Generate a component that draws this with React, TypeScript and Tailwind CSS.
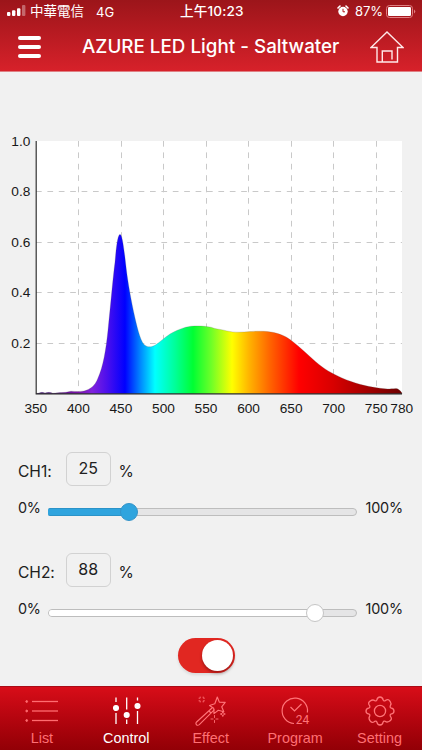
import React from 'react';

const X_TICKS = [350, 400, 450, 500, 550, 600, 650, 700, 750, 780];
const Y_TICKS = [1.0, 0.8, 0.6, 0.4, 0.2];
const px = (nm: number) => 36 + (nm - 350) * 0.851;
const py = (v: number) => 322 - v * 252.6;

const CURVE =
  'M36 321.6 L39 321 Q42 319.6 45 321 Q49 319.6 53 321.2 L60 320.6 Q65 320.8 71 319.2 Q78 320 84 319 C90 317.5 95 314 98 306 C103 295 106 278 108 258 C111 229 113 205 115 190 C116.5 172 118 162.4 120 162.4 C122 162.4 123.5 172 126.3 197 C128 211 131 228 135 246 C138 259 141 270 144.5 273 C148 275.7 152 275 155 273.3 C160 270 164 266 170 262 C176 258.5 184 255 191 254.2 C198 253.6 205 254 211 255.2 C216 257.5 221 257 227 259 C235 261 243 260 250 259.6 C260 258.8 268 259.2 274 260.6 C282 262.5 287 265 292 269 C301 276 308 283 316 290 C324 297 332 301.5 342 306 C355 311.5 365 314 377 315.8 C385 317.3 389 317 396 316.4 Q399 316.4 402 321 L402 322 L36 322 Z';

const STOPS: [number, string][] = [
  [36, '#3b0a78'], [78, '#7a12a8'], [92, '#8022dc'], [106, '#5010ec'], [125, '#0000ff'],
  [140, '#0084ff'], [155, '#00ffff'], [175, '#00ff99'], [193, '#00ff33'], [211, '#6cff28'],
  [232, '#ffff00'], [249, '#ffb400'], [270, '#ff6400'], [299, '#ff0000'], [333, '#d80000'],
  [376, '#960000'], [402, '#6c0000'],
];

function StatusBar() {
  return (
    <div className="relative flex h-[22px] items-center pl-[7px] pr-[6px] font-['Inter','Noto_Sans_CJK_TC',sans-serif] text-[13px] leading-[22px]">
      <svg width="19" height="12" viewBox="0 0 19 12" fill="white">
        <rect x="0" y="7" width="3.4" height="4" rx="1" />
        <rect x="5" y="5.2" width="3.4" height="5.8" rx="1" />
        <rect x="10" y="3.2" width="3.4" height="7.8" rx="1" />
        <rect x="15" y="0" width="3.4" height="11" rx="1" opacity=".35" />
      </svg>
      <span className="ml-[4px] w-[66px] text-[13.5px]">中華電信</span>
      <span className="pt-[2px] text-[13px]">4G</span>
      <span className="absolute left-[180px] text-[13.6px] font-medium tracking-[0.15px]">上午10:23</span>
      <svg className="ml-auto" width="12" height="12" viewBox="0 0 12 12" fill="white">
        <circle cx="6" cy="6.5" r="4.7" />
        <path d="M1 3 3 1M11 3 9 1" stroke="white" strokeWidth="1.6" strokeLinecap="round" />
        <path d="M6 3.8V6.8H8" stroke="#b1161b" strokeWidth="1" fill="none" />
      </svg>
      <span className="ml-[6px] w-[31px] text-[13px] tracking-[-0.1px]">87%</span>
      <svg width="30" height="13" viewBox="0 0 30 13">
        <rect x=".5" y=".5" width="26" height="12" rx="3" fill="none" stroke="#e07f82" />
        <rect x="2" y="2" width="23" height="9" rx="1.3" fill="white" />
        <path d="M28 4.5Q30.5 6.5 28 8.5Z" fill="#e07f82" />
      </svg>
    </div>
  );
}

function Header() {
  return (
    <header className="h-[72px] border-b border-[#df8084] bg-gradient-to-b from-[#9c151a] to-[#d7212a] text-white">
      <StatusBar />
      <div className="flex h-[49px] items-center pl-[18px] pr-[18px]">
        <div className="flex w-[23px] flex-col gap-[5px]">
          <i className="h-[4px] rounded-full bg-white" />
          <i className="h-[4px] rounded-full bg-white" />
          <i className="h-[4px] rounded-full bg-white" />
        </div>
        <h1 className="ml-[41px] whitespace-nowrap font-['Inter',sans-serif] text-[18.8px] font-medium leading-[24px] tracking-[0.02px]">
          AZURE LED Light - Saltwater
        </h1>
        <svg className="ml-auto" width="34" height="32" viewBox="0 0 34 32" fill="none" stroke="#ffe9e9" strokeWidth="1.4">
          <path d="M7 16.5H1L17 1 33 16.5H27.5V31H7Z M12.3 31V20H22V28.5" />
        </svg>
      </div>
    </header>
  );
}

function Spectrum() {
  return (
    <svg className="block" width="422" height="356" viewBox="0 0 422 356">
      <defs>
        <linearGradient id="spectrum" gradientUnits="userSpaceOnUse" x1="36" y1="0" x2="402" y2="0">
          {STOPS.map(([x, c]) => (
            <stop key={x} offset={(x - 36) / 366} stopColor={c} />
          ))}
        </linearGradient>
      </defs>
      <rect x="36" y="69" width="366" height="253" fill="white" />
      <g stroke="#c9c9c9" strokeWidth="1" strokeDasharray="5.7 5.7">
        {X_TICKS.slice(1, 9).map((t) => (
          <line key={t} x1={Math.floor(px(t)) + 0.5} x2={Math.floor(px(t)) + 0.5} y1="69" y2="322" />
        ))}
        {Y_TICKS.slice(1).map((t) => (
          <line key={t} x1="36" x2="402" y1={Math.floor(py(t)) + 0.5} y2={Math.floor(py(t)) + 0.5} />
        ))}
      </g>
      <path d={CURVE} fill="url(#spectrum)" stroke="#555" strokeOpacity=".35" strokeWidth=".6" />
      <path d="M36.2 69V321.8H402" fill="none" stroke="#333" strokeWidth="1.2" />
      <g fontFamily="Liberation Sans, sans-serif" fontSize="13.7" fill="#181818">
        {Y_TICKS.map((t) => (
          <text key={t} x="30.4" y={py(t) + 4.3} textAnchor="end">{t.toFixed(1)}</text>
        ))}
        {X_TICKS.map((t) => (
          <text key={t} x={px(t) - 0.2} y="340.5" textAnchor="middle">{t}</text>
        ))}
      </g>
    </svg>
  );
}

function Channel({ name, value, blue }: { name: string; value: number; blue?: boolean }) {
  return (
    <section className="h-[101px] pl-[18px] font-['Inter',sans-serif] text-[#202020]">
      <div className="flex h-[35px] text-[15.6px]">
        <span className="w-[48px] pt-[10px] leading-[20px] tracking-[-0.05px]">{name}</span>
        <span className="h-[34px] w-[44.5px] rounded-[6px] border border-[#d2d2d2] text-center text-[16px] leading-[31px]">{value}</span>
        <span className="pl-[8px] pt-[10px] leading-[20px]">%</span>
      </div>
      <div className="mt-[12px] flex h-[26px] items-center text-[14.4px]">
        <span className="w-[30px] pb-[8px] tracking-[-0.4px]">0%</span>
        <div className="relative h-[8px] w-[309px] rounded-full border border-[#bdbdbd] bg-[#e5e5e6]">
          <div className={blue ? '-ml-px -mt-px h-[8px] w-[81px] rounded-l-[2px] border-y border-[#2b93c8] bg-[#2fa4de]' : 'h-[6px] w-[266px] rounded-l-full bg-white'} />
          <div className={blue ? 'absolute left-[71px] top-[-6px] size-[18px] rounded-full border border-[#3494c9] bg-[#2fa4de]' : 'absolute left-[257px] top-[-6px] size-[18px] rounded-full border border-[#c5c5c5] bg-white'} />
        </div>
        <span className="ml-[8.5px] pb-[8px] tracking-[-0.2px]">100%</span>
      </div>
    </section>
  );
}

function ListIcon() {
  return (
    <svg width="36" height="30" viewBox="0 0 36 30" fill="#ff6c70" stroke="#ff6c70">
      {[5.5, 15, 24.5].map((y) => (
        <g key={y}>
          <circle cx="2.7" cy={y} r=".9" />
          <path d={`M8 ${y}H34`} strokeWidth="1.3" />
        </g>
      ))}
    </svg>
  );
}

function ControlIcon() {
  return (
    <svg width="30" height="30" viewBox="0 0 30 30" fill="white" stroke="white" strokeWidth="1.3">
      <path d="M4 1.5V6M4 17V28M14.7 1.5V13.5M14.7 23.5V28M25.5 1.5V4.5M25.5 15V28" />
      <circle cx="4" cy="12" r="2.4" />
      <circle cx="14.7" cy="19" r="2.4" />
      <circle cx="25.5" cy="10" r="2.4" />
    </svg>
  );
}

function EffectIcon() {
  return (
    <svg width="32" height="30" viewBox="0 0 32 30" fill="none" stroke="#ff7478" strokeWidth="1.15" strokeLinejoin="round" strokeLinecap="round">
      <path d="M22.3 1 24.3 6.1 30.2 6.4 26.7 10.8 28.8 15.8 23.3 14.3 19 17.6 18.7 12.3 14.5 9.5 19.8 7.7Z" />
      <path d="M17.3 11.8 1.3 26.3Q.4 28 1.7 29Q3 29.7 4.3 28.6L19.2 13.8M14 15 16 17" />
      <path d="M5.2 1V2.2H4M8.2 1V2.2H9.4M5.2 6V4.8H4M8.2 6V4.8H9.4M19.5 19.5V21.5M19.5 24.5V26.5M16 23H18M21 23H23M27.8 15.5 28.5 17.3 30.3 18 28.5 18.7 27.8 20.5 27.1 18.7 25.3 18 27.1 17.3Z" strokeWidth=".9" />
    </svg>
  );
}

function ProgramIcon() {
  return (
    <svg width="30" height="30" viewBox="0 0 30 30" fill="none" stroke="#ff7478" strokeWidth="1.2">
      <path d="M14 27.5A12.7 12.7 0 1 1 27.4 16.5M10.5 11 14.5 15 21.5 8" />
      <text x="15.8" y="28.3" fill="#ff7478" stroke="none" fontFamily="Roboto, sans-serif" fontSize="12">24</text>
    </svg>
  );
}

// Eight rounded teeth with small notches between them.
function SettingIcon() {
  return (
    <svg width="30" height="30" viewBox="0 0 30 30" fill="none" stroke="#ff7478" strokeWidth="1.3" strokeLinejoin="round">
      <path d="M11.8 4.1C12.2 2 13 1 15 1S17.8 2 18.2 4.1Q18.6 5.3 20.4 4.6C22.2 3.1 23.6 3.2 24.9 5.1S26.8 7.6 25.4 9.6Q24.7 11.4 25.9 11.8C28 12.2 29 13 29 15S28 17.8 25.9 18.2Q24.7 18.6 25.4 20.4C26.8 22.2 26.8 23.6 24.9 24.9S22.2 26.8 20.4 25.4Q18.6 24.7 18.2 25.9C17.8 28 17 29 15 29S12.2 28 11.8 25.9Q11.4 24.7 9.6 25.4C7.8 26.8 6.4 26.8 5.1 24.9S3.2 22.2 4.6 20.4Q5.3 18.6 4.1 18.2C2 17.8 1 17 1 15S2 12.2 4.1 11.8Q5.3 11.4 4.6 9.6C3.2 7.8 3.2 6.4 5.1 5.1S7.8 3.2 9.6 4.6Q11.4 5.3 11.8 4.1Z" />
      <circle cx="15" cy="15" r="5.6" />
    </svg>
  );
}

const TABS = [
  { label: 'List', icon: <ListIcon /> },
  { label: 'Control', icon: <ControlIcon />, active: true },
  { label: 'Effect', icon: <EffectIcon /> },
  { label: 'Program', icon: <ProgramIcon /> },
  { label: 'Setting', icon: <SettingIcon /> },
];

export default function App() {
  return (
    <div className="flex h-[750px] w-[422px] flex-col overflow-hidden bg-[#f1f1f1]">
      <Header />
      <main className="flex-1">
        <Spectrum />
        <div className="pt-[24px]">
          <Channel name="CH1:" value={25} blue />
          <Channel name="CH2:" value={88} />
        </div>
        <div className="ml-[178px] mt-[-16px] flex h-[35px] w-[57px] justify-end rounded-full bg-[#e12721] p-[2px] shadow-[0_2px_3px_rgba(0,0,0,0.1)]">
          <div className="size-[31px] rounded-full bg-white shadow-[0_2px_3px_rgba(80,0,0,0.45)]" />
        </div>
      </main>
      <nav className="grid h-[64px] grid-cols-5 border-t border-[#a90c16] bg-gradient-to-b from-[#d80d18] to-[#920006]">
        {TABS.map((t) => (
          <div key={t.label} className={`flex flex-col items-center pt-[9px] font-['Liberation_Sans',sans-serif] text-[14.4px] leading-[17px] ${t.active ? 'text-white' : 'text-[#ff7074]'}`}>
            {t.icon}
            <span className="mt-[4px] pr-[0.6px]">{t.label}</span>
          </div>
        ))}
      </nav>
    </div>
  );
}
